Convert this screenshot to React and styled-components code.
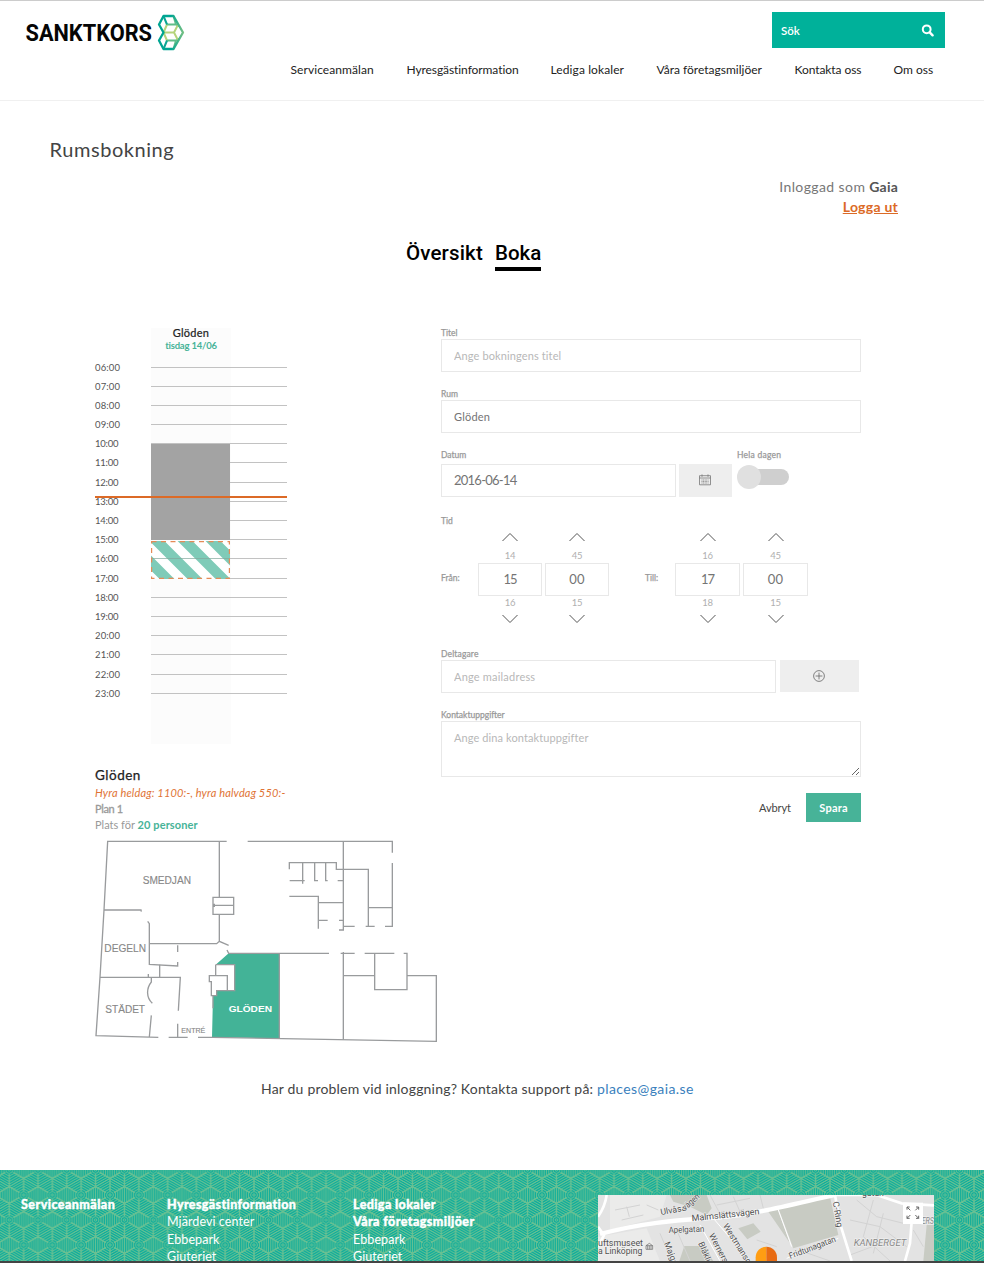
import React from "react";
import styled, { createGlobalStyle, css } from "styled-components";

const SANS = '"Lato", "Open Sans", sans-serif';
const DIN = '"Roboto", "Liberation Sans", sans-serif';
const GREEN = "#47b398";
const ORANGE = "#dc6a26";

const GlobalStyle = createGlobalStyle`
  * { box-sizing: border-box; }
  html, body { margin: 0; padding: 0; }
  body { background: #fff; font-family: ${SANS}; color: #444; overflow: hidden; }
  input, textarea, button { font-family: inherit; margin: 0; border-radius: 0; outline: none; }
`;

const Page = styled.div`
  width: 984px;
  height: 1263px;
  overflow: hidden;
  display: flex;
  flex-direction: column;
  border-top: 1px solid #ccc;
`;

/* ---------- header ---------- */
const Header = styled.header`
  height: 100px;
  flex: none;
  border-bottom: 1px solid #f0f0f0;
  display: flex;
  flex-direction: column;
`;
const HeaderTop = styled.div`
  height: 47px;
  padding: 11px 39px 0 25px;
  display: flex;
  justify-content: space-between;
`;
const Logo = styled.svg`
  display: block;
  margin-top: 2px;
  overflow: visible;
`;
const Search = styled.div`
  width: 173px;
  height: 36px;
  background: #00b19a;
  color: #fff;
  font-size: 11.5px;
  font-weight: 600;
  padding: 0 11px 0 9px;
  display: flex;
  align-items: center;
  justify-content: space-between;
`;
const Nav = styled.nav`
  margin-top: 12px;
  padding-right: 51.5px;
  display: flex;
  justify-content: flex-end;
  gap: 32px;
`;
const NavLink = styled.a`
  width: ${(p) => p.$width}px;
  font-size: 12px;
  line-height: 20px;
  letter-spacing: ${(p) => p.$track}px;
  color: #222;
  white-space: nowrap;
`;

/* ---------- title area ---------- */
const Title = styled.h1`
  margin: 34px 0 0 49.6px;
  height: 28px;
  flex: none;
  font-size: 20px;
  line-height: 28px;
  font-weight: 400;
  letter-spacing: 0.55px;
  color: #444;
`;
const Account = styled.div`
  margin: 14px 86px 0 0;
  text-align: right;
  font-size: 14px;
  line-height: 20px;
  letter-spacing: 0.4px;
  color: #777;
  b { color: #555; letter-spacing: 0.2px; }
  a { color: ${ORANGE}; font-weight: 700; text-decoration: underline; letter-spacing: 0.25px; }
`;
const Tabs = styled.div`
  margin: 22px 0 0 406px;
  display: flex;
  gap: 12px;
`;
const Tab = styled.a`
  width: ${(p) => p.$width}px;
  height: 32px;
  font-family: ${DIN};
  font-weight: 500;
  font-size: 20.5px;
  line-height: 28px;
  letter-spacing: ${(p) => p.$track || 0}px;
  white-space: nowrap;
  color: #000;
  border-bottom: 4px solid ${(p) => (p.$active ? "#000" : "transparent")};
`;

/* ---------- main ---------- */
const Main = styled.main`
  display: flex;
  height: 729px;
  padding-top: 57px;
  padding-left: 95px;
  flex: none;
`;
const Left = styled.section`
  width: 346px;
  flex: none;
`;
const Calendar = styled.div`
  position: relative;
  width: 192px;
  height: 416px;
  display: flex;
  flex-direction: column;
`;
const DayColumn = styled.div`
  width: 80px;
  height: 416px;
  margin-left: 56px;
  background: #fcfcfc;
  text-align: center;
  flex: none;
`;
const RoomName = styled.div`
  font-size: 11px;
  line-height: 10px;
  letter-spacing: 0.25px;
  color: #222;
  -webkit-text-stroke: 0.2px #222;
`;
const DayName = styled.div`
  margin-top: 2px;
  font-size: 9.5px;
  line-height: 12px;
  letter-spacing: -0.2px;
  font-weight: 700;
  color: ${GREEN};
`;
const Hours = styled.div`
  position: relative;
  margin-top: -386.6px;
`;
const Hour = styled.div`
  height: 19.2px;
  display: flex;
  align-items: center;
  font-size: 9.5px;
  letter-spacing: ${(p) => (p.$narrow ? -0.25 : 0.15)}px;
  color: #555;
  span { width: 56px; }
  &::after { content: ""; flex: 1; height: 1px; background: #c2c2c2; }
`;
const block = css`
  position: absolute;
  left: 56px;
  width: 79px;
`;
const Busy = styled.div`
  ${block}
  top: 116px;
  height: 96px;
  background: #a3a3a3;
`;
const Booking = styled.svg`
  ${block}
  top: 213px;
  height: 38px;
`;
const Now = styled.div`
  position: absolute;
  left: 0;
  top: 168px;
  width: 192px;
  height: 2px;
  background: ${ORANGE};
`;
const RoomInfo = styled.div`
  margin-top: 22px;
  font-size: 11px;
  line-height: 16px;
  color: #999;
  h2 {
    margin: 0;
    font-size: 13.5px;
    line-height: 19px;
    font-weight: 400;
    letter-spacing: 0.5px;
    color: #222;
    -webkit-text-stroke: 0.25px #222;
  }
  p { margin: 0; height: 16px; white-space: nowrap; }
`;
const Price = styled.p`
  font-style: italic;
  color: #e07335;
  letter-spacing: 0.16px;
`;
const Floor = styled.p`
  letter-spacing: -0.35px;
  -webkit-text-stroke: 0.3px #999;
`;
const Seats = styled.p`
  b { color: ${GREEN}; letter-spacing: 0.1px; }
`;
const Plan = styled.svg`
  display: block;
  margin-top: 7px;
  width: 343px;
  height: 203px;
`;

/* ---------- form ---------- */
const Form = styled.form`
  width: 420px;
  flex: none;
`;
const Field = styled.div`
  height: ${(p) => p.$height}px;
`;
const Row = styled.div`
  display: flex;
  gap: ${(p) => p.$gap || 0}px;
`;
const Label = styled.label`
  display: block;
  height: ${(p) => p.$height || 11}px;
  font-size: 8.5px;
  line-height: 10px;
  letter-spacing: ${(p) => p.$track || 0}px;
  color: #999;
  -webkit-text-stroke: 0.25px #999;
  white-space: nowrap;
`;
const Input = styled.input`
  display: block;
  width: ${(p) => p.$width}px;
  height: 33px;
  border: 1px solid #e8e8e8;
  padding: 0 12px 1px;
  background: #fff;
  font-size: ${(p) => p.$size || 11}px;
  letter-spacing: ${(p) => p.$track ?? 0.2}px;
  color: #747474;
  text-align: ${(p) => (p.$center ? "center" : "left")};
  &::placeholder { color: #b8b8b8; opacity: 1; }
`;
const Area = styled.textarea`
  display: block;
  width: 420px;
  height: 56px;
  border: 1px solid #e8e8e8;
  padding: 9px 12px;
  font-size: 11px;
  letter-spacing: 0.1px;
  line-height: 14px;
  resize: vertical;
  &::placeholder { color: #b8b8b8; opacity: 1; }
`;
const IconButton = styled.button`
  width: ${(p) => p.$width}px;
  height: ${(p) => p.$height || 32}px;
  border: 0;
  padding: 0 1px 1px 0;
  background: #eee;
  display: flex;
  align-items: center;
  justify-content: center;
`;
const ToggleWrap = styled.div`
  padding-left: 2px;
`;
const Toggle = styled.div`
  width: 52px;
  height: 24px;
  margin-top: 1px;
  padding: 4px 0 4px 10px;
  position: relative;
  &::before { content: ""; display: block; height: 16px; border-radius: 8px; background: #cfcfcf; }
  &::after { content: ""; position: absolute; left: 0; top: 0; width: 24px; height: 24px; border-radius: 50%; background: #e0e0e0; }
`;
const Time = styled.div`
  display: grid;
  grid-template-columns: 34px 64px 64px 30px 27px 65px 65px;
  column-gap: 3px;
  align-items: center;
`;
const Spinner = styled.div`
  display: flex;
  flex-direction: column;
  align-items: center;
  svg { display: block; }
`;
const Near = styled.div`
  height: ${(p) => (p.$above ? 21 : 18)}px;
  padding-top: ${(p) => (p.$above ? 8 : 1)}px;
  font-size: 9.5px;
  line-height: 12px;
  letter-spacing: -0.3px;
  color: #b0b0b0;
`;
const Participants = styled.div`
  height: 61px;
  margin-top: 25px;
`;
const Actions = styled.div`
  display: flex;
  justify-content: flex-end;
  gap: 15px;
`;
const Button = styled.button`
  width: ${(p) => (p.$primary ? 55 : 32)}px;
  height: 29px;
  padding: 0;
  border: 0;
  font-size: 11px;
  letter-spacing: ${(p) => (p.$primary ? 0.2 : -0.1)}px;
  font-weight: ${(p) => (p.$primary ? 700 : 400)};
  color: ${(p) => (p.$primary ? "#fff" : "#444")};
  background: ${(p) => (p.$primary ? GREEN : "transparent")};
`;

/* ---------- support + footer ---------- */
const Support = styled.p`
  margin: 78px 0 0 261px;
  height: 22px;
  flex: none;
  font-size: 14px;
  line-height: 22px;
  letter-spacing: 0.19px;
  white-space: nowrap;
  color: #444;
  a { color: #3a7fbd; letter-spacing: 0.4px; }
`;
const Footer = styled.footer`
  position: relative;
  margin-top: 70px;
  flex: none;
  height: 93px;
  border-bottom: 2px solid #444;
  overflow: hidden;
  background: #10ad9b;
`;
const Backdrop = styled.svg`
  position: absolute;
  inset: 0;
`;
const FooterInner = styled.div`
  position: relative;
  display: grid;
  grid-template-columns: 146px 186px 245px 336px;
  padding: 25px 0 0 21px;
`;
const FooterCol = styled.div`
  display: flex;
  flex-direction: column;
  padding-top: 1px;
  font-size: 12.5px;
  line-height: 17.3px;
  letter-spacing: 0.08px;
  color: #fff;
  white-space: nowrap;
`;
const FooterHead = styled.b`
  font-weight: 900;
  letter-spacing: ${(p) => p.$track || 0}px;
  -webkit-text-stroke: 0.4px #fff;
`;
const MapView = styled.svg`
  display: block;
`;

const SearchIcon = () => (
  <svg width="13" height="13" viewBox="0 0 13 13" fill="none" stroke="#fff">
    <circle cx="5.7" cy="5.3" r="3.9" strokeWidth="2" />
    <path d="M8.7 8.3 L11.6 11.3" strokeWidth="2.4" strokeLinecap="round" />
  </svg>
);

const Chevron = ({ down }) => (
  <svg width="16" height="10" viewBox="0 0 16 10" fill="none" stroke="#555" strokeWidth="1">
    <path d={down ? "M0.5 1 L8 8.5 L15.5 1" : "M0.5 9 L8 1.5 L15.5 9"} />
  </svg>
);

const CalendarIcon = () => (
  <svg width="12" height="12" viewBox="0 0 12 12" fill="none" stroke="#777" strokeWidth="0.8">
    <path d="M0.5 1.7 H11.5 V10.8 H0.5 Z M0.5 4 H11.5 M3 0.4 V2.8 M9 0.4 V2.8" />
    <path d="M2.5 6 H9.5 M2.5 7.5 H9.5 M2.5 9 H9.5" strokeDasharray="1 0.6" />
  </svg>
);

const PlusIcon = () => (
  <svg width="12" height="12" viewBox="0 0 12 12" fill="none" stroke="#666" strokeWidth="0.8">
    <circle cx="6" cy="6" r="5.4" />
    <path d="M6 2.6 V9.4 M2.6 6 H9.4" />
  </svg>
);

const BrandLogo = () => (
  <Logo width="160" height="36" viewBox="0 0 160 36">
    <defs>
      <linearGradient id="brand" gradientUnits="userSpaceOnUse" x1="133" y1="0" x2="159" y2="0">
        <stop offset="0.5" stopColor="#00a592" />
        <stop offset="1" stopColor="#7cc183" />
      </linearGradient>
    </defs>
    <text x="0.5" y="27" textLength="126.5" lengthAdjust="spacingAndGlyphs" fontFamily={DIN} fontWeight="700" fontSize="23.8" fill="#050505">SANKTKORS</text>
    <g fill="none" strokeWidth="2" strokeLinejoin="round">
      <path stroke="#5fbd88" d="M142 10.5 H151 L148.5 2 M151 10.5 L154.5 12 M142 26.5 H151 L148.5 35 M151 26.5 L154.5 25" />
      <path stroke="#b5d47c" d="M142 10.5 L138.5 18.5 H149 L153 10.8 M149 18.5 L153 26.2 M138.5 18.5 L142 26.5" />
      <path stroke="#0ba693" d="M138.5 2 L142 10.5 M142 26.5 L138.5 35" />
      <path stroke="url(#brand)" strokeWidth="2.3" d="M138.5 2 H148.5 L158 18.5 L148.5 35 H138.5 L134 26.5 L138.5 18.5 L134 10.5 Z" />
    </g>
  </Logo>
);

const FloorPlan = () => (
  <Plan viewBox="45 30 1029 609">
    <path fill="#43b397" d="M446 370 H598 V625 L396 622 L399 497 H410 V482 H464 V404 H407 Z" />
    <g fill="none" stroke="#999b9d" strokeWidth="4">
      <path d="M440 34 H83 L72 240 L60 442 L48 617 L235 622 M72 240 H183 L184 245" />
      <path d="M203 274 L208 281 V403 L293 408 V396 M293 366 V346 M208 341 H410 L418 334 L446 346 M418 334 V253 M418 202 V34" />
      <path d="M399 202 H461 V253 H399 Z M399 226 H461 M403 221 V231 M239 404 V442 M205 432 V442 M60 442 H301 L295 542 M214 442 V456 C199 475 198 502 217 520 M214 556 L208 621 M293 581 V621 M266 622 H323 M354 622 H396 L1069 634 V437 H981" />
      <path d="M441 360 L446 370 H747 M407 404 H464 V482 H410 V497 H394 V455 H388 V437 H442 V480 M407 404 V437 M399 497 V535 M598 370 V626" />
      <path d="M503 34 H937 V68 M937 99 V289 H915 M790 34 V300 H777 M628 118 V98 H769 V118 H865 V289 M857 289 H884 M865 233 H937 M790 289 H824" />
      <path d="M629 152 H674 M668 98 V161 M704 98 V152 H714 M737 98 V152 H743 M773 152 H790 M628 199 H715 V296 M715 218 H790 M715 271 H743 M777 271 H790" />
      <path d="M782 370 H824 M854 370 H943 M790 366 V629 M790 437 H884 M884 370 V479 H981 V370 H971" />
    </g>
    <g fontFamily="Liberation Sans, sans-serif" fill="#888" stroke="#888" strokeWidth="0.4">
      <text x="188" y="161" fontSize="30" textLength="145" lengthAdjust="spacingAndGlyphs">SMEDJAN</text>
      <text x="73" y="365" fontSize="30" textLength="125" lengthAdjust="spacingAndGlyphs">DEGELN</text>
      <text x="76" y="548" fontSize="30" textLength="119" lengthAdjust="spacingAndGlyphs">STÄDET</text>
      <text x="304" y="608" fontSize="23" textLength="72" lengthAdjust="spacingAndGlyphs">ENTRÉ</text>
      <text x="446" y="545" fontSize="29" fontWeight="700" fill="#fff" stroke="none" textLength="130" lengthAdjust="spacingAndGlyphs">GLÖDEN</text>
    </g>
  </Plan>
);

const hexagon = (cx, cy, a) => {
  const r = (a * 2) / Math.sqrt(3);
  return `M${cx} ${cy - r} L${cx + a} ${cy - r / 2} V${cy + r / 2} L${cx} ${cy + r} L${cx - a} ${cy + r / 2} V${cy - r / 2} Z`;
};
const CENTERS = [[0, 0], [28.8, 0], [14.4, 25], [0, 50], [28.8, 50]];

const FooterPattern = () => (
  <Backdrop width="984" height="91">
    <defs>
      <pattern id="hexes" width="28.8" height="50" patternUnits="userSpaceOnUse" x="23.6" y="25">
        <g fill="none" stroke="#6bc192" strokeWidth="0.95">
          {CENTERS.map(([x, y]) => (
            <g key={`${x}-${y}`}>
              {[5.4, 7.7, 10, 12.2, 14.4].map((a) => <path key={a} d={hexagon(x, y, a)} />)}
              <path strokeWidth="1.4" d={`M${x} ${y - 16.6} V${y - 4} M${x} ${y + 4} V${y + 16.6} M${x - 14.4} ${y - 8.3} L${x - 4} ${y - 2.3} M${x + 4} ${y + 2.3} L${x + 14.4} ${y + 8.3} M${x - 14.4} ${y + 8.3} L${x - 4} ${y + 2.3} M${x + 4} ${y - 2.3} L${x + 14.4} ${y - 8.3}`} />
              <circle cx={x} cy={y} r="3.4" />
              <circle cx={x} cy={y} r="1.2" />
            </g>
          ))}
        </g>
      </pattern>
    </defs>
    <rect width="984" height="91" fill="url(#hexes)" />
  </Backdrop>
);

const StreetMap = () => (
  <MapView width="336" height="66" viewBox="24 45 1008 198">
    <rect x="24" y="45" width="1008" height="198" fill="#e3e3e3" />
    <path fill="#ebebea" d="M60 45 H230 L210 110 L60 150 Z M24 170 L170 145 L210 243 H24 Z" />
    <g fill="#c8cbc3">
      <path d="M240 45 H350 L365 85 L350 105 L300 80 L250 65 Z M565 85 L720 50 L745 165 L610 205 Z M445 145 L490 130 L512 155 L472 178 Z M283 198 H345 L370 243 H268 Z M535 95 L562 85 L600 190 Z M1010 135 H1032 V243 H1000 Z" />
    </g>
    <g fill="none" stroke="#d3d3d3" strokeWidth="3">
      <path d="M75 90 L150 75 M95 120 L160 105 M110 80 L118 110 M170 75 L205 90 M360 45 L400 120 M430 50 L450 95 M510 45 L520 85 M380 75 L480 55 M800 60 L860 110 L940 130 M780 120 L870 140 L950 200 M820 170 L900 243 M850 60 L820 170 M880 100 L850 220 M970 150 L1000 200 M640 215 L720 243 M210 160 L245 243 M260 150 L300 243 M500 180 L560 200 M780 225 L900 180" />
    </g>
    <g fill="none" stroke="#fff">
      <path strokeWidth="13" d="M30 162 C180 122 290 120 390 112 S600 75 735 45" />
      <path strokeWidth="8" d="M24 110 Q45 80 50 45 M24 140 L42 165 L24 200 M735 45 L750 130 L785 243 M735 45 H860 L935 70 L1032 76 M965 125 L960 190 L945 243" />
      <path strokeWidth="3" d="M370 115 L480 243 M330 135 L390 243 M565 90 L605 200 M590 235 L745 175" />
    </g>
    <g fontFamily="Roboto, sans-serif" fontSize="26" fill="#505050" stroke="#f3f3f3" strokeWidth="3" paintOrder="stroke">
      <text transform="translate(213 105) rotate(-10)" textLength="78" lengthAdjust="spacingAndGlyphs">Ulvåsa</text>
      <text transform="translate(286 92) rotate(-42)" textLength="60" lengthAdjust="spacingAndGlyphs">vägen</text>
      <text transform="translate(306 124) rotate(-6)" textLength="204" lengthAdjust="spacingAndGlyphs" fontSize="27">Malmslättsvägen</text>
      <text transform="translate(236 159) rotate(-2)" textLength="107" lengthAdjust="spacingAndGlyphs">Apelgatan</text>
      <text transform="translate(398 137) rotate(58)">Westmansg</text>
      <text transform="translate(356 166) rotate(62)">Werners</text>
      <text transform="translate(324 190) rotate(66)">Blåkli</text>
      <text transform="translate(222 190) rotate(68)">Majga</text>
      <text transform="translate(601 237) rotate(-21)" textLength="148" lengthAdjust="spacingAndGlyphs">Fridtunagatan</text>
      <text transform="translate(728 66) rotate(80)" textLength="78" lengthAdjust="spacingAndGlyphs">C-Ring</text>
      <text x="816" y="49">gatan</text>
      <text x="24" y="197" textLength="135" lengthAdjust="spacingAndGlyphs">uftsmuseet</text>
      <text x="24" y="223" textLength="133" lengthAdjust="spacingAndGlyphs">a Linköping</text>
      <g fontStyle="italic" fill="#888">
        <text x="791" y="198" textLength="158" lengthAdjust="spacingAndGlyphs">KANBERGET</text>
        <text x="995" y="131" textLength="37" lengthAdjust="spacingAndGlyphs">ERS</text>
      </g>
    </g>
    <g fill="none" stroke="#666" strokeWidth="2">
      <path d="M168 197 H188 V208 H168 Z M168 197 L178 190 L188 197 M173 197 V208 M178 197 V208 M183 197 V208" />
    </g>
    <path fill="#ff9d12" d="M529 200 A32 32 0 0 0 497 232 V243 H529 Z" />
    <path fill="#e86b13" d="M529 200 A32 32 0 0 1 561 232 V243 H529 Z" />
    <rect x="939" y="68" width="60" height="64" fill="#fff" />
    <path fill="none" stroke="#666" strokeWidth="3" d="M951 89 V81 H959 M951 81 L961 91 M978 81 H986 V89 M986 81 L976 91 M951 107 V115 H959 M951 115 L961 105 M978 115 H986 V107 M986 115 L976 105" />
  </MapView>
);

const NAV = [
  ["Serviceanmälan", 84, 0.08],
  ["Hyresgästinformation", 112, -0.08],
  ["Lediga lokaler", 74, 0.1],
  ["Våra företagsmiljöer", 106, 0],
  ["Kontakta oss", 67, -0.07],
  ["Om oss", 39, 0],
];
const HOURS = Array.from({ length: 18 }, (_, i) => i + 6);

const TimeSpinner = ({ before, value, after, width, track }) => (
  <Spinner>
    <Chevron />
    <Near $above>{before}</Near>
    <Input $width={width} $size={13} $track={track} $center defaultValue={value} />
    <Near>{after}</Near>
    <Chevron down />
  </Spinner>
);

export default function App() {
  return (
    <>
      <GlobalStyle />
      <Page>
        <Header>
          <HeaderTop>
            <BrandLogo />
            <Search>Sök<SearchIcon /></Search>
          </HeaderTop>
          <Nav>
            {NAV.map(([text, width, track]) => (
              <NavLink key={text} $width={width} $track={track}>{text}</NavLink>
            ))}
          </Nav>
        </Header>

        <Title>Rumsbokning</Title>
        <Account>
          Inloggad som <b>Gaia</b><br /><a>Logga ut</a>
        </Account>
        <Tabs>
          <Tab $width={77} $track={0.15}>Översikt</Tab>
          <Tab $width={46} $active>Boka</Tab>
        </Tabs>

        <Main>
          <Left>
            <Calendar>
              <DayColumn>
                <RoomName>Glöden</RoomName>
                <DayName>tisdag 14/06</DayName>
              </DayColumn>
              <Hours>
                {HOURS.map((h) => (
                  <Hour key={h} $narrow={h >= 10 && h < 20}>
                    <span>{String(h).padStart(2, "0")}:00</span>
                  </Hour>
                ))}
              </Hours>
              <Busy />
              <Booking width="79" height="38" viewBox="0 0 79 38">
                <rect width="79" height="38" fill="#fff" />
                <g stroke="#7fcbb8" strokeWidth="10.5">
                  <path d="M-26 -4 L22 44 M2 -4 L50 44 M30 -4 L78 44 M58 -4 L106 44" />
                </g>
                <path d="M0 17.5 H79" stroke="#82a79c" strokeWidth="0.7" />
                <rect x="0.5" y="0.5" width="78" height="37" fill="none" stroke="#e58b57" strokeWidth="1.4" strokeDasharray="5 4.5" />
              </Booking>
              <Now />
            </Calendar>
            <RoomInfo>
              <h2>Glöden</h2>
              <Price>Hyra heldag: 1100:-, hyra halvdag 550:-</Price>
              <Floor>Plan 1</Floor>
              <Seats>Plats för <b>20 personer</b></Seats>
            </RoomInfo>
            <FloorPlan />
          </Left>

          <Form>
            <Field $height={61}>
              <Label>Titel</Label>
              <Input $width={420} $track={0.12} placeholder="Ange bokningens titel" />
            </Field>
            <Field $height={61}>
              <Label>Rum</Label>
              <Input $width={420} defaultValue="Glöden" />
            </Field>
            <Row $gap={3}>
              <Field $height={66}>
                <Label $height={13.5}>Datum</Label>
                <Row $gap={3}>
                  <Input $width={235} $size={13} $track={-0.75} defaultValue="2016-06-14" />
                  <IconButton type="button" $width={53} $height={33}><CalendarIcon /></IconButton>
                </Row>
              </Field>
              <Field $height={66}>
                <ToggleWrap>
                  <Label $height={14} $track={0.25}>Hela dagen</Label>
                  <Toggle />
                </ToggleWrap>
              </Field>
            </Row>
            <Label $height={16}>Tid</Label>
            <Time>
              <Label>Från:</Label>
              <TimeSpinner before="14" value="15" after="16" width={64} track={-1} />
              <TimeSpinner before="45" value="00" after="15" width={64} />
              <span />
              <Label>Till:</Label>
              <TimeSpinner before="16" value="17" after="18" width={65} track={-1} />
              <TimeSpinner before="45" value="00" after="15" width={65} />
            </Time>
            <Participants>
              <Label $track={0.15}>Deltagare</Label>
              <Row $gap={4}>
                <Input $width={335} placeholder="Ange mailadress" />
                <IconButton type="button" $width={79}><PlusIcon /></IconButton>
              </Row>
            </Participants>
            <Field $height={83}>
              <Label>Kontaktuppgifter</Label>
              <Area placeholder="Ange dina kontaktuppgifter" />
            </Field>
            <Actions>
              <Button type="button">Avbryt</Button>
              <Button type="button" $primary>Spara</Button>
            </Actions>
          </Form>
        </Main>

        <Support>
          Har du problem vid inloggning? Kontakta support på: <a>places@gaia.se</a>
        </Support>

        <Footer>
          <FooterPattern />
          <FooterInner>
            <FooterCol><FooterHead $track={0.45}>Serviceanmälan</FooterHead></FooterCol>
            <FooterCol>
              <FooterHead $track={0.37}>Hyresgästinformation</FooterHead>
              <span>Mjärdevi center</span><span>Ebbepark</span><span>Gjuteriet</span>
            </FooterCol>
            <FooterCol>
              <FooterHead $track={0.38}>Lediga lokaler</FooterHead>
              <FooterHead $track={0.42}>Våra företagsmiljöer</FooterHead>
              <span>Ebbepark</span><span>Gjuteriet</span>
            </FooterCol>
            <StreetMap />
          </FooterInner>
        </Footer>
      </Page>
    </>
  );
}
